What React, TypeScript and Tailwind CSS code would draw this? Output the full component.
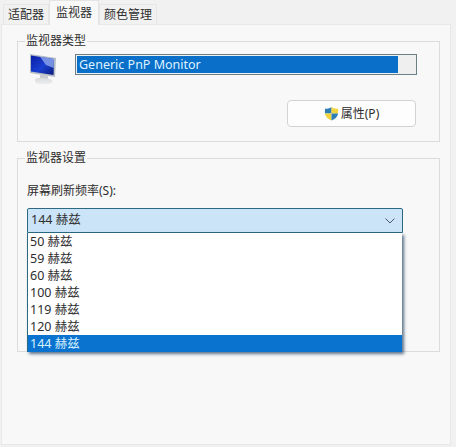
import React from 'react'

const RATES = ['50', '59', '60', '100', '119', '120', '144']
const FONT = 'font-["Noto_Sans","Noto_Sans_CJK_SC",sans-serif]'

function MonitorIcon() {
  return (
    <svg width="30" height="33" viewBox="0 0 30 33" className="shrink-0">
      <defs>
        <linearGradient id="scr" x1="0" y1="0" x2="1" y2="1">
          <stop offset="0" stopColor="#0a1fa8" />
          <stop offset="0.55" stopColor="#1a3fd0" />
          <stop offset="1" stopColor="#0c1a78" />
        </linearGradient>
        <linearGradient id="base" x1="0" y1="0" x2="0" y2="1">
          <stop offset="0" stopColor="#d8dadc" />
          <stop offset="1" stopColor="#eceeef" />
        </linearGradient>
      </defs>
      <path d="M2 1 L28 5 L27 24 L2 20 Z" fill="#b4bcc4" />
      <path d="M3 2.5 L26 6 L25.5 22 L3 18.5 Z" fill="url(#scr)" />
      <path d="M12 3.8 L26 6 L25.7 15 L18 12 Z" fill="#8ea6ea" opacity="0.8" />
      <path d="M12 21 L20 22.5 L20 27 L12 26 Z" fill="#c9cccf" />
      <path d="M7 26 Q14 23 24 27 Q26 30 20 31 Q10 32 7 29 Z" fill="url(#base)" />
    </svg>
  )
}

function ShieldIcon() {
  return (
    <svg width="15" height="15" viewBox="0 0 16 16" className="shrink-0">
      <path d="M8 1 C5.5 2.6 3.5 3 1 3 L1 8 L8 8 Z" fill="#2f7fb5" />
      <path d="M8 1 C10.5 2.6 12.5 3 15 3 L15 8 L8 8 Z" fill="#f2d53c" />
      <path d="M1 8 C1.5 11.5 4 14 8 15.5 L8 8 Z" fill="#f2d53c" />
      <path d="M15 8 C14.5 11.5 12 14 8 15.5 L8 8 Z" fill="#2f7fb5" />
    </svg>
  )
}

function Tab({ label, active }: { label: string; active?: boolean }) {
  return active ? (
    <div className="h-[25px] w-[50px] pt-[3px] text-center bg-[#f8f8f8] border-t border-x border-[#e4e4e4] relative z-10">
      {label}
    </div>
  ) : (
    <div className="h-[20px] mt-[4px] px-[4px] pt-[1px] bg-[#f1f1f1] border-t border-x border-[#e6e6e6]">
      {label}
    </div>
  )
}

function GroupBox({ title, className, children }: { title: string; className: string; children: React.ReactNode }) {
  return (
    <div className={`border border-[#dcdcdc] relative ${className}`}>
      <span className="absolute left-[7px] top-[-9px] px-px bg-[#f8f8f8] leading-[16px]">{title}</span>
      {children}
    </div>
  )
}

export default function App() {
  return (
    <div className={`w-[456px] h-[447px] bg-[#f1f1f1] overflow-hidden text-[12px] text-[#2e2e2e] ${FONT}`}>
      {/* tabs */}
      <div className="flex h-[24px] pl-[3px]">
        <Tab label="适配器" />
        <Tab label="监视器" active />
        <Tab label="颜色管理" />
      </div>

      <div className="ml-px w-[450px] h-[421px] bg-[#f8f8f8] border border-[#e8e8e8] pt-[16px] pl-[15px]">
        <GroupBox title="监视器类型" className="w-[423px] h-[101px] pl-[10px] pt-[11px]">
          <div className="flex gap-[17px]">
            <MonitorIcon />
            <div className="mt-[1px] w-[342px] h-[21px] border border-[#6d7f86] bg-[#efefef] p-px">
              <div className="w-[321px] h-[17px] bg-[#0a6fc9] text-[#dff2ff] text-[12.5px] leading-[18px] pl-[2px]">
                Generic PnP Monitor
              </div>
            </div>
          </div>
          <div className="mt-[14px] ml-[259px] w-[129px] h-[27px] bg-[#fdfdfd] border border-[#d2d2d2] rounded-[4px] flex items-center justify-center gap-[2px]">
            <ShieldIcon />
            <span>属性(P)</span>
          </div>
        </GroupBox>

        <GroupBox title="监视器设置" className="mt-[16px] w-[423px] h-[194px] pl-[9px] pt-[24px]">
          <div className="leading-[16px]">屏幕刷新频率(S):</div>
          <div className="relative mt-[9px] w-[376px]">
            <div className="h-[25px] bg-[#cbe4f8] border border-[#2b6a80] rounded-t-[2px] flex items-center justify-between pl-[3px] pr-[7px] text-[12.5px]">
              <span>144 赫兹</span>
              <svg width="10" height="6" viewBox="0 0 10 6">
                <path d="M0.5 0.5 L5 5 L9.5 0.5" fill="none" stroke="#4d5a66" strokeWidth="1" />
              </svg>
            </div>
            {/* dropdown list */}
            <div className="absolute left-0 top-[25px] w-[375px] bg-white border-l border-[#2b6a80] shadow-[2px_2px_3px_rgba(40,70,100,0.75)] text-[12.5px] z-20">
              {RATES.map(r => (
                <div
                  key={r}
                  className={`h-[17px] leading-[17px] pl-[2px] ${r === '144' ? 'bg-[#0a72cf] text-[#d9f2ff]' : ''}`}
                >
                  {r} 赫兹
                </div>
              ))}
            </div>
          </div>
        </GroupBox>
      </div>
    </div>
  )
}
